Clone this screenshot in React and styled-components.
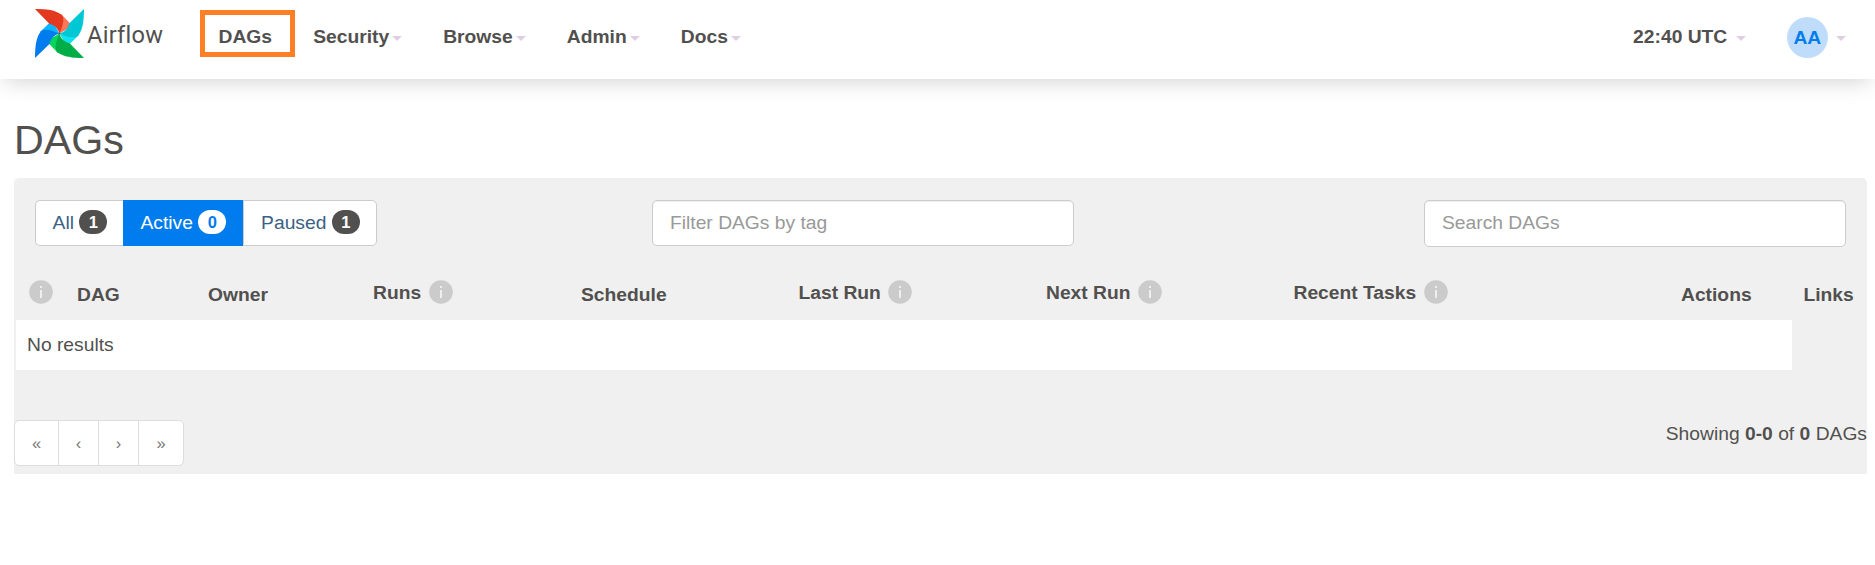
import React from "react";
import styled, { createGlobalStyle } from "styled-components";

const GlobalStyle = createGlobalStyle`
  * { box-sizing: border-box; }
  body {
    margin: 0;
    background: #fff;
    color: #51504f;
    font: 19.25px/26px "Liberation Sans", Arial, sans-serif;
  }
`;

const Navbar = styled.nav`
  position: relative;
  display: flex;
  align-items: flex-start;
  height: 79px;
  padding-left: 35px;
  background: #fff;
  box-shadow: 0 8px 20px -5px rgba(0, 0, 0, 0.17);
`;

const Brand = styled.a`
  display: flex;
  width: 163px;
  padding-top: 9px;
`;

const BrandName = styled.span`
  margin: 10px 0 0 3px;
  font: 400 23.6px/32px Roboto, sans-serif;
  letter-spacing: 0.25px;
`;

const NavList = styled.ul`
  display: flex;
  margin: 0;
  padding: 0;
  list-style: none;
`;

const NavItem = styled.li`
  position: relative;
  display: flex;
  align-items: center;
  height: 73px;
  padding: 0 20.55px;
  font-weight: 700;
  white-space: nowrap;
`;

const Highlight = styled.span`
  position: absolute;
  top: 10px;
  left: 2px;
  width: 95px;
  height: 47px;
  border: 5px solid #ff7f27;
`;

const Caret = styled.span`
  margin: 3px 0 0 ${(p) => p.$gap || 3}px;
  border-top: 5px solid #e0cfe3;
  border-left: 5px solid transparent;
  border-right: 5px solid transparent;
`;

const UserArea = styled(NavList)`
  margin-left: auto;
  padding-right: 8.6px;
`;

const Avatar = styled.span`
  width: 41px;
  height: 41px;
  margin-top: 2px;
  border-radius: 50%;
  background: #bfddfb;
  color: #017cee;
  line-height: 41px;
  text-align: center;
`;

const Page = styled.main`
  padding: 36px 8px 0 14px;
`;

const Title = styled.h1`
  margin: 0;
  height: 63px;
  font-size: 41.2px;
  line-height: 51px;
  font-weight: 400;
`;

const Panel = styled.section`
  height: 296px;
  border-radius: 5px 5px 0 0;
  background: #f0f0f0;
`;

const Toolbar = styled.div`
  display: flex;
  align-items: flex-start;
  justify-content: space-between;
  height: 95px;
  padding: 22px 21px 0;
`;

const ButtonGroup = styled.div`
  display: flex;
  width: 342px;
  height: 46px;
`;

const FilterButton = styled.a`
  display: flex;
  justify-content: center;
  width: ${(p) => p.$width}px;
  padding: 9px 0 0 1px;
  border: 1px solid ${(p) => (p.$active ? "#017cee" : "#ccc")};
  background: ${(p) => (p.$active ? "#017cee" : "#fff")};
  color: ${(p) => (p.$active ? "#fff" : "#3b6284")};
  gap: 5.5px;
  &:first-child { border-right: 0; border-radius: 5px 0 0 5px; }
  &:last-child { border-radius: 0 5px 5px 0; }
`;

const Badge = styled.span`
  width: 28px;
  height: 24px;
  border-radius: 12px;
  background: ${(p) => (p.$active ? "#fff" : "#51504f")};
  color: ${(p) => (p.$active ? "#017cee" : "#fff")};
  font-size: 16.5px;
  font-weight: 700;
  line-height: 24px;
  text-align: center;
`;

const Field = styled.input`
  width: 422px;
  height: ${(p) => p.$height}px;
  margin: 0 0 0 ${(p) => p.$offset || 0}px;
  padding: 0 17px ${(p) => (p.$height % 2 ? 2 : 1)}px;
  border: 1px solid #ccc;
  border-radius: 5px;
  background: #fff;
  box-shadow: inset 0 1px 1px rgba(0, 0, 0, 0.075);
  font: inherit;
  &::placeholder { color: #999; opacity: 1; }
`;

const TableHead = styled.div`
  display: grid;
  grid-template-columns: 48px 131px 165px 208px 217.5px 247.5px 247.5px 387.5px 122.5px 1fr;
  height: 47px;
  padding-left: 15px;
  font-weight: 700;
`;

const HeadCell = styled.div`
  display: flex;
  align-items: center;
  gap: 7.5px;
  height: 26px;
  margin-top: ${(p) => (p.$info ? 6 : 8)}px;
  white-space: nowrap;
`;

const HeadLabel = styled.span`
  padding-top: 1px;
`;

const EmptyRow = styled.div`
  width: 1776px;
  height: 50px;
  margin-left: 2px;
  padding: 12px 11px;
  background: #fff;
`;

const Footer = styled.footer`
  display: flex;
  justify-content: space-between;
  padding-top: 50px;
`;

const Pager = styled.div`
  display: flex;
  height: 46px;
  border: 1px solid #ddd;
  border-radius: 5px;
  background: #fff;
  overflow: hidden;
`;

const PageLink = styled.a`
  width: ${(p) => p.$width}px;
  color: #777;
  font-size: 16.5px;
  line-height: 44px;
  text-align: center;
  & + & { border-left: 1px solid #ddd; }
`;

const Summary = styled.div`
  padding-top: 1px;
`;

const BLADES = [
  { angle: 0, dark: "#e43921", light: "#ff7557" },
  { angle: 90, dark: "#00c7d4", light: "#11e1ee" },
  { angle: 180, dark: "#00ad46", light: "#04d659" },
  { angle: 270, dark: "#017cee", light: "#0cb6ff" },
];

const Pinwheel = () => (
  <svg width="49" height="49" viewBox="0 0 49 49">
    {BLADES.map((b) => (
      <path
        key={b.angle}
        transform={`rotate(${b.angle} 24.5 24.5)`}
        d="M26 5 35 14.300 34 19 24.500 24.500Z"
        fill={b.light}
      />
    ))}
    {BLADES.map((b) => (
      <path
        key={b.angle}
        transform={`rotate(${b.angle} 24.5 24.5)`}
        d="M0 0C12 .2 20 .8 27 6C30 10 27.500 18 24.500 24.500C23 19 19.500 16 14.300 14.700Z"
        fill={b.dark}
      />
    ))}
    <circle cx="24.500" cy="24.500" r=".8" fill="#51504f" />
  </svg>
);

const InfoIcon = () => (
  <svg width="24" height="24" viewBox="0 0 24 24">
    <circle cx="12" cy="12" r="11.800" fill="#cbcbcb" />
    <path d="M11 6h2v2h-2zM11 10h2v8h-2z" fill="#efefef" />
  </svg>
);

const MENUS = ["Security", "Browse", "Admin", "Docs"];

const FILTERS = [
  { label: "All", count: 1, width: 88 },
  { label: "Active", count: 0, width: 120, active: true },
  { label: "Paused", count: 1, width: 134 },
];

const COLUMNS = [
  { label: "", info: true },
  { label: "DAG" },
  { label: "Owner" },
  { label: "Runs", info: true },
  { label: "Schedule" },
  { label: "Last Run", info: true },
  { label: "Next Run", info: true },
  { label: "Recent Tasks", info: true },
  { label: "Actions" },
  { label: "Links" },
];

const PAGES = [["«", 43], ["‹", 40], ["›", 40], ["»", 45]];

export default function App() {
  return (
    <>
      <GlobalStyle />
      <Navbar>
        <Brand>
          <Pinwheel />
          <BrandName>Airflow</BrandName>
        </Brand>
        <NavList>
          <NavItem>
            DAGs
            <Highlight />
          </NavItem>
          {MENUS.map((name) => (
            <NavItem key={name}>
              {name}
              <Caret />
            </NavItem>
          ))}
        </NavList>
        <UserArea>
          <NavItem>
            22:40 UTC
            <Caret $gap={8.5} />
          </NavItem>
          <NavItem>
            <Avatar>AA</Avatar>
            <Caret $gap={8} />
          </NavItem>
        </UserArea>
      </Navbar>
      <Page>
        <Title>DAGs</Title>
        <Panel>
          <Toolbar>
            <ButtonGroup>
              {FILTERS.map((f) => (
                <FilterButton key={f.label} $width={f.width} $active={f.active}>
                  {f.label}
                  <Badge $active={f.active}>{f.count}</Badge>
                </FilterButton>
              ))}
            </ButtonGroup>
            <Field $height={46} $offset={-75} placeholder="Filter DAGs by tag" />
            <Field $height={47} placeholder="Search DAGs" />
          </Toolbar>
          <TableHead>
            {COLUMNS.map((c, i) => (
              <HeadCell key={i} $info={c.info}>
                {c.label && <HeadLabel>{c.label}</HeadLabel>}
                {c.info && <InfoIcon />}
              </HeadCell>
            ))}
          </TableHead>
          <EmptyRow>No results</EmptyRow>
          <Footer>
            <Pager>
              {PAGES.map(([glyph, width]) => (
                <PageLink key={glyph} $width={width}>{glyph}</PageLink>
              ))}
            </Pager>
            <Summary>
              Showing <b>0-0</b> of <b>0</b> DAGs
            </Summary>
          </Footer>
        </Panel>
      </Page>
    </>
  );
}
